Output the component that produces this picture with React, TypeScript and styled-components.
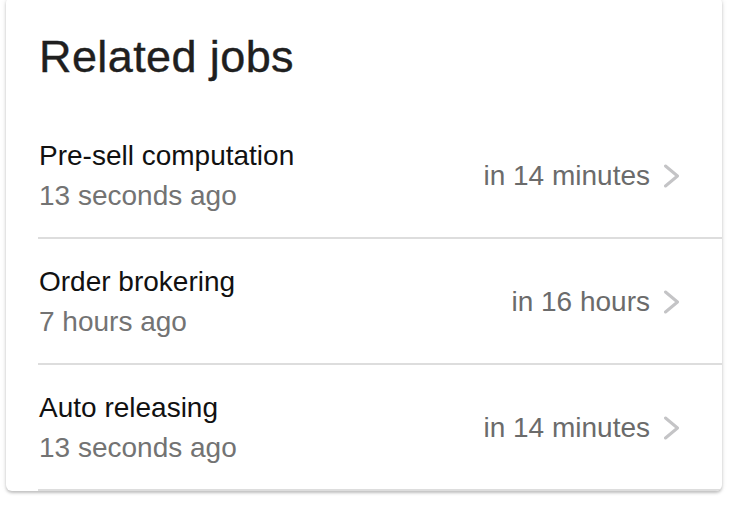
import React from "react";
import styled, { createGlobalStyle } from "styled-components";

const GlobalStyle = createGlobalStyle`
  html, body {
    margin: 0;
    padding: 0;
    background: #ffffff;
    font-family: "Liberation Sans", Arial, Helvetica, sans-serif;
  }
`;

const Page = styled.div`
  padding: 0 18px 20px 6px;
`;

const Card = styled.section`
  margin-top: -3px;
  background: #ffffff;
  border-radius: 6px;
  box-shadow: 0 2px 3px rgba(0, 0, 0, 0.22), 0 0 6px rgba(0, 0, 0, 0.08);
  overflow: hidden;
`;

const Header = styled.h2`
  margin: 0;
  padding: 38px 33px 34px;
  font-size: 45px;
  line-height: 44px;
  letter-spacing: 0.4px;
  font-weight: 400;
  color: #1f1f1f;
  -webkit-text-stroke: 0.4px #1f1f1f;
`;

const List = styled.ul`
  list-style: none;
  margin: 0;
  padding: 0;
`;

const Row = styled.li`
  margin-left: 32px;
  padding: 23px 42px 21px 1px;
  border-bottom: 2px solid #dddddd;
  display: flex;
  align-items: center;
  justify-content: space-between;
`;

const Info = styled.div`
  display: flex;
  flex-direction: column;
`;

const Name = styled.span`
  font-size: 28px;
  line-height: 40px;
  color: #111111;
`;

const Ago = styled.span`
  font-size: 28px;
  line-height: 40px;
  color: #737373;
`;

const Next = styled.div`
  display: flex;
  align-items: center;
  gap: 13px;
`;

const NextText = styled.span`
  font-size: 28px;
  line-height: 40px;
  color: #6b6b6b;
`;

const Chevron = () => (
  <svg width="17" height="24" viewBox="0 0 17 24" aria-hidden="true">
    <polyline
      points="2.5,2 14.5,12 2.5,22"
      fill="none"
      stroke="#c4c4c6"
      strokeWidth="3"
      strokeLinecap="round"
      strokeLinejoin="round"
    />
  </svg>
);

const jobs = [
  { name: "Pre-sell computation", ago: "13 seconds ago", next: "in 14 minutes" },
  { name: "Order brokering", ago: "7 hours ago", next: "in 16 hours" },
  { name: "Auto releasing", ago: "13 seconds ago", next: "in 14 minutes" },
];

export default function App() {
  return (
    <>
      <GlobalStyle />
      <Page>
        <Card>
          <Header>Related jobs</Header>
          <List>
            {jobs.map((job) => (
              <Row key={job.name}>
                <Info>
                  <Name>{job.name}</Name>
                  <Ago>{job.ago}</Ago>
                </Info>
                <Next>
                  <NextText>{job.next}</NextText>
                  <Chevron />
                </Next>
              </Row>
            ))}
          </List>
        </Card>
      </Page>
    </>
  );
}
